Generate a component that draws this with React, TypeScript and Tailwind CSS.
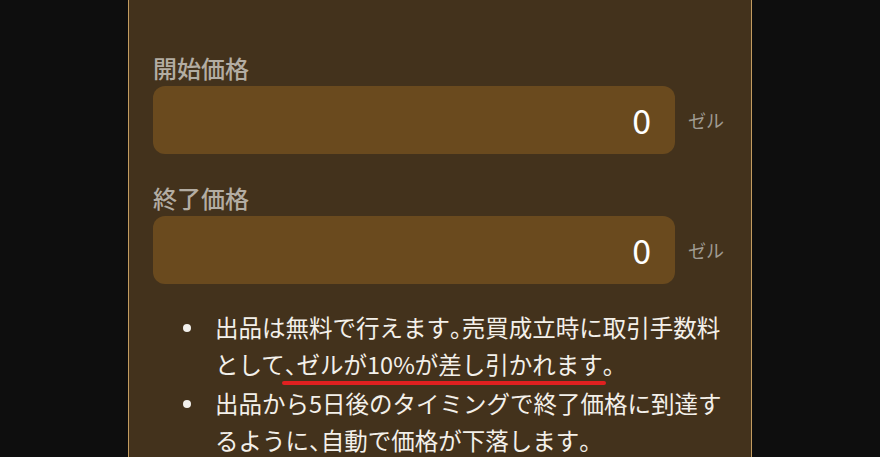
import * as React from 'react';

const fontStack = '"Noto Sans CJK JP", "Noto Sans", sans-serif';

function Half({ children }: { children: React.ReactNode }) {
  return <span style={{ fontFeatureSettings: '"halt"' }}>{children}</span>;
}

interface PriceFieldProps {
  label: string;
  value: number;
  className?: string;
}

function PriceField({ label, value, className }: PriceFieldProps) {
  return (
    <div className={className}>
      <div className="mb-[2px] text-[24px] font-medium leading-[32px] text-[#b3ada3]">{label}</div>
      <div className="flex items-center gap-[13px]">
        <div className="flex h-[68px] w-[522px] items-center justify-end rounded-[12px] bg-[#6a4a1e] pr-[24px] text-[34px] leading-none text-white">
          {value}
        </div>
        <span className="text-[18px] text-[#a09b92]">ゼル</span>
      </div>
    </div>
  );
}

export default function App() {
  return (
    <div className="flex h-[457px] justify-center overflow-hidden bg-[#0e0e0e]" style={{ fontFamily: fontStack }}>
      <div className="h-[457px] w-[624px] border-x border-[#c29b5f] bg-[#43321c] pl-[24px] pt-[52px]">
        <PriceField label="開始価格" value={0} />
        <PriceField label="終了価格" value={0} className="mt-[28px]" />

        <ul className="mt-[25px] pl-[30px] text-[23.5px] leading-[37px] text-[#f3f0ea]">
          <li className="flex">
            <span className="mr-[24px] mt-[15px] h-[8px] w-[8px] shrink-0 rounded-full bg-[#f2f0ec]" />
            <p className="w-[515px]">
              出品は無料で行えます<Half>。</Half>売買成立時に取引手数料として<Half>、</Half>
              <span className="relative after:absolute after:left-[-15px] after:right-[9px] after:bottom-[-4px] after:h-[4px] after:rounded-full after:bg-[#e02020] after:content-['']">
                ゼルが10%が差し引かれます<Half>。</Half>
              </span>
            </p>
          </li>
          <li className="mt-[2px] flex">
            <span className="mr-[24px] mt-[15px] h-[8px] w-[8px] shrink-0 rounded-full bg-[#f2f0ec]" />
            <p className="w-[515px]">
              出品から5日後のタイミングで終了価格に到達するように<Half>、</Half>自動で価格が下落します<Half>。</Half>
            </p>
          </li>
        </ul>
      </div>
    </div>
  );
}
